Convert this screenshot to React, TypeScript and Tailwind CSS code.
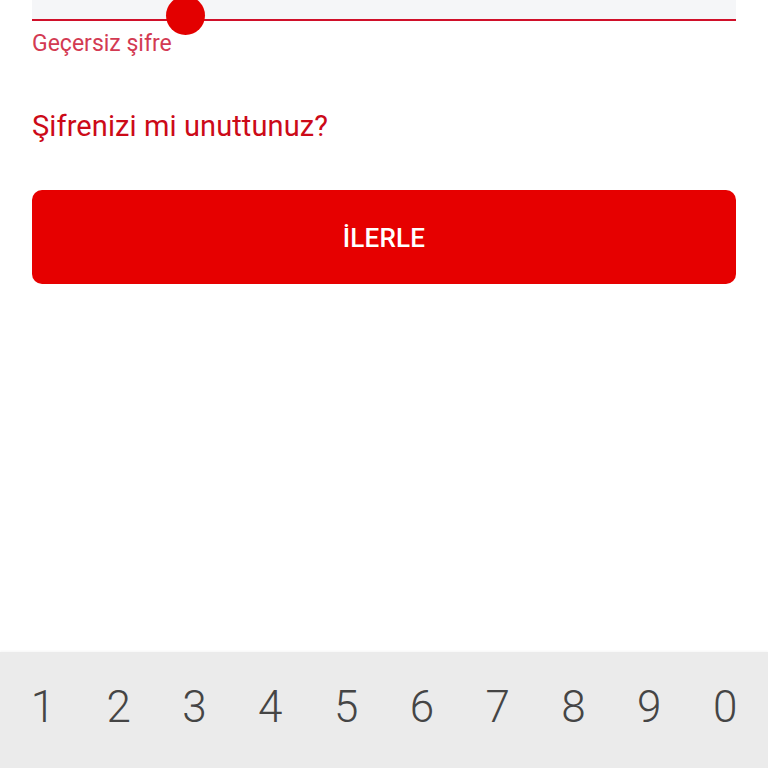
import React from "react";

const digits = ["1", "2", "3", "4", "5", "6", "7", "8", "9", "0"];

export default function App() {
  return (
    <div
      className="relative flex h-[768px] w-[768px] flex-col overflow-hidden bg-white"
      style={{ fontFamily: "Roboto, 'Noto Sans', sans-serif" }}
    >
      <div className="flex flex-1 flex-col px-8">
        {/* password field (scrolled off the top) */}
        <div className="relative h-[21px] border-b-2 border-[#d0102a] bg-[#f5f6f8]">
          <span className="absolute left-[134px] top-[-4px] h-[39px] w-[39px] rounded-full bg-[#e30000]" />
        </div>
        <p className="mt-[9px] text-[23px] leading-[28px] text-[#d33a52]">
          Geçersiz şifre
        </p>

        <button
          type="button"
          className="mt-[51px] self-start text-left text-[29px] leading-[34px] tracking-[0.1px] text-[#cc0a18]"
        >
          Şifrenizi mi unuttunuz?
        </button>

        <button
          type="button"
          className="mt-[47px] flex h-[94px] w-full items-center justify-center rounded-[10px] bg-[#e60000] pt-[3px] text-[26px] font-medium tracking-[0.2px] text-white"
        >
          İLERLE
        </button>
      </div>

      {/* keyboard number row */}
      <div className="h-[116px] bg-[#ebebeb] shadow-[0_-1px_2px_rgba(0,0,0,0.04)]">
        <div className="grid grid-cols-10 px-[5px] pt-[29px]">
          {digits.map((d) => (
            <span
              key={d}
              className="text-center text-[44px] font-light leading-[52px] text-[#454545]"
            >
              {d}
            </span>
          ))}
        </div>
      </div>
    </div>
  );
}
